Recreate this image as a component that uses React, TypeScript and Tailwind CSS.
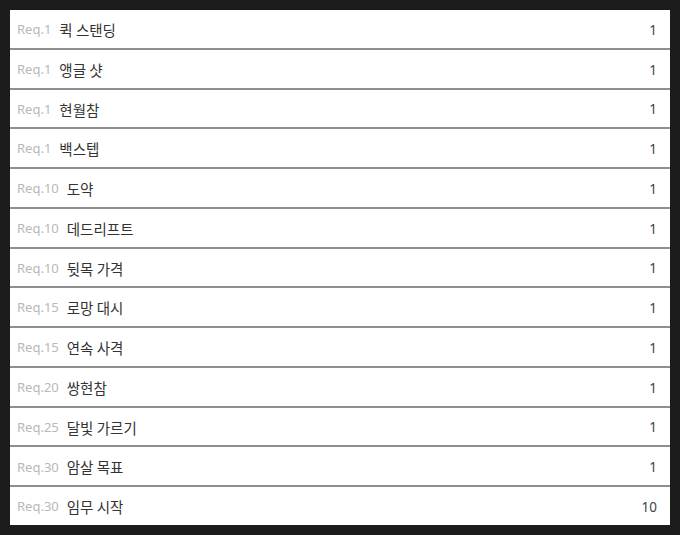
import React from "react";

const skills: [string, string, number][] = [
  ["Req.1", "퀵 스탠딩", 1],
  ["Req.1", "앵글 샷", 1],
  ["Req.1", "현월참", 1],
  ["Req.1", "백스텝", 1],
  ["Req.10", "도약", 1],
  ["Req.10", "데드리프트", 1],
  ["Req.10", "뒷목 가격", 1],
  ["Req.15", "로망 대시", 1],
  ["Req.15", "연속 사격", 1],
  ["Req.20", "쌍현참", 1],
  ["Req.25", "달빛 가르기", 1],
  ["Req.30", "암살 목표", 1],
  ["Req.30", "임무 시작", 10],
];

export default function App() {
  return (
    <div className="w-[680px] h-[535px] bg-[#1c1c1c] p-[10px] font-['Noto_Sans','Noto_Sans_CJK_KR',sans-serif]">
      <div className="flex flex-col bg-white h-[515px]">
        {skills.map(([req, name, count], i) => (
          <div
            key={i}
            className={
              "flex flex-1 items-center pt-[2px] pl-[7px] pr-[13px] " +
              (i < skills.length - 1 ? "border-b-2 border-[#8e8e8e]" : "")
            }
          >
            <span className="text-[13px] text-[#b8b8b8]">{req}</span>
            <span className="ml-[8px] text-[14.5px] text-[#333] font-['Noto_Sans_CJK_KR',sans-serif]">
              {name}
            </span>
            <span className="ml-auto text-[13.5px] text-[#444]">{count}</span>
          </div>
        ))}
      </div>
    </div>
  );
}
